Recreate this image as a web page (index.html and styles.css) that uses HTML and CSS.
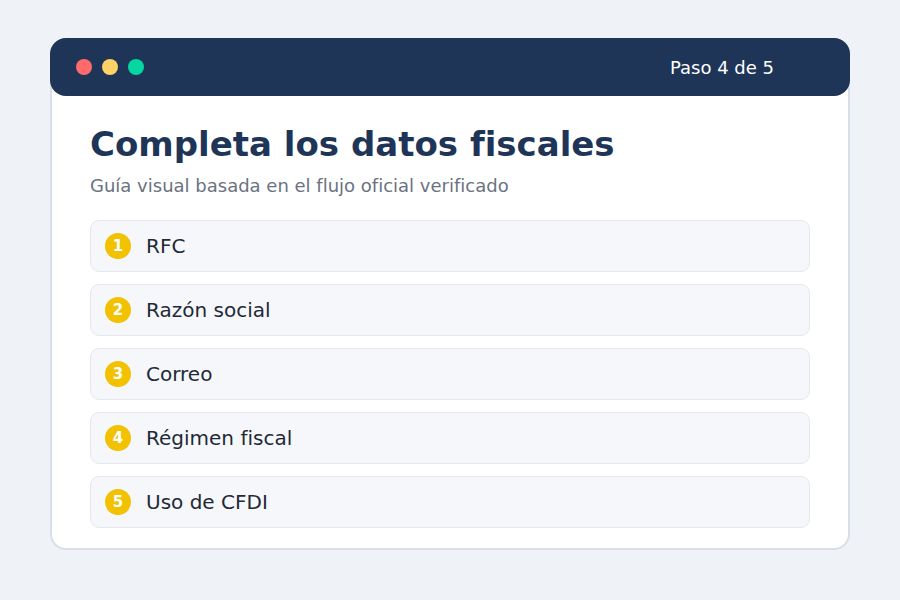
FILE: index.html
```html
<!DOCTYPE html>
<html lang="es">
<head>
<meta charset="utf-8">
<link rel="stylesheet" href="styles.css">
</head>
<body>
<div class="card">
  <div class="bar">
    <div class="dots">
      <span class="dot red"></span>
      <span class="dot yellow"></span>
      <span class="dot green"></span>
    </div>
    <div class="step">Paso 4 de 5</div>
  </div>
  <div class="body">
    <h1 class="title">Completa los datos fiscales</h1>
    <p class="subtitle">Guía visual basada en el flujo oficial verificado</p>
    <ul class="list">
      <li class="item"><span class="badge">1</span><span class="label">RFC</span></li>
      <li class="item"><span class="badge">2</span><span class="label">Razón social</span></li>
      <li class="item"><span class="badge">3</span><span class="label">Correo</span></li>
      <li class="item"><span class="badge">4</span><span class="label">Régimen fiscal</span></li>
      <li class="item"><span class="badge">5</span><span class="label">Uso de CFDI</span></li>
    </ul>
  </div>
</div>
</body>
</html>
```
FILE: styles.css
```css
html, body { margin: 0; padding: 0; }
body {
  width: 900px; height: 600px;
  background: #eff2f6;
  font-family: "DejaVu Sans", "Liberation Sans", sans-serif;
  padding: 38px 50px 0;
  box-sizing: border-box;
}
.card {
  width: 800px; height: 512px;
  box-sizing: border-box;
  background: #fff;
  border: 2px solid #d8dfe8;
  border-radius: 16px;
}
.bar {
  height: 58px;
  margin: -2px -2px 0;
  background: #1e3557;
  border-radius: 16px;
  display: flex; align-items: center; justify-content: space-between;
  padding: 0 76px 0 26px;
}
.dots { display: flex; gap: 10px; }
.dot { width: 16px; height: 16px; border-radius: 50%; display: block; }
.red { background: #ff6b6b; }
.yellow { background: #ffd166; }
.green { background: #06d6a0; }
.step { color: #fff; font-size: 18px; }
.body { padding: 26px 38px 0; }
.title {
  margin: 0; font-size: 34px; font-weight: bold; color: #1e3557; line-height: 44px;
}
.subtitle { margin: 8px 0 0; font-size: 18px; color: #6b7280; line-height: 24px; }
.list { list-style: none; margin: 22px 0 0; padding: 0; display: flex; flex-direction: column; gap: 12px; }
.item {
  height: 52px; box-sizing: border-box;
  background: #f5f7fa; border: 1px solid #e5e9ef; border-radius: 9px;
  display: flex; align-items: center; padding-left: 14px; gap: 15px;
}
.badge {
  width: 26px; height: 26px; border-radius: 50%;
  background: #f2c200; color: #fff; font-weight: bold; font-size: 15px;
  display: flex; align-items: center; justify-content: center;
}
.label { font-size: 20px; color: #1f2937; }
```
